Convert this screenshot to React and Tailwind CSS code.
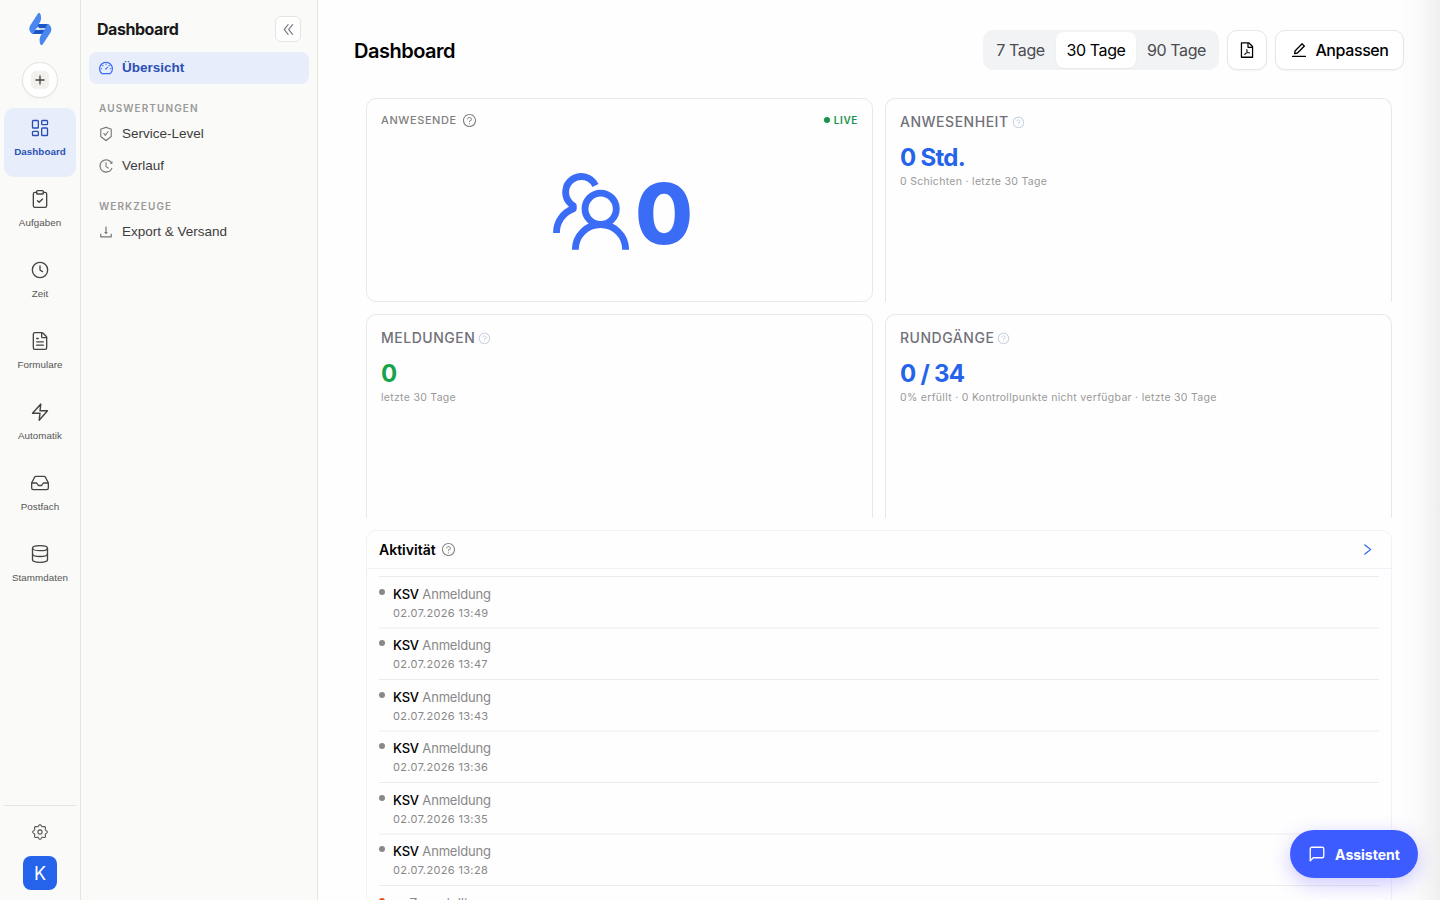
import React from "react";
import { LayoutDashboard, ClipboardCheck, FileText, Inbox, Database, Plus } from "lucide-react";
import {
  AiOutlineDashboard, AiOutlineSafetyCertificate, AiOutlineHistory, AiOutlineDownload,
  AiOutlineQuestionCircle, AiOutlineDoubleLeft, AiOutlineRight, AiOutlineFilePdf, AiOutlineEdit,
} from "react-icons/ai";

const RAIL = [
  { label: "Dashboard", icon: LayoutDashboard, active: true },
  { label: "Aufgaben", icon: ClipboardCheck },
  { label: "Zeit", icon: ClockIcon },
  { label: "Formulare", icon: FileText },
  { label: "Automatik", icon: BoltIcon },
  { label: "Postfach", icon: Inbox },
  { label: "Stammdaten", icon: Database },
];

const ACTIVITY = ["13:49", "13:47", "13:43", "13:36", "13:35", "13:28"];

function ClockIcon({ className }) {
  return (
    <svg className={className} width="20" height="20" viewBox="0 0 24 24" fill="none" stroke="currentColor" strokeWidth="1.6" strokeLinecap="round" strokeLinejoin="round">
      <circle cx="12" cy="12" r="9.2" />
      <path d="M12 7v5l3 2" />
    </svg>
  );
}

function BoltIcon({ className }) {
  return (
    <svg className={className} width="20" height="20" viewBox="0 0 24 24" fill="none" stroke="currentColor" strokeWidth="1.7" strokeLinecap="round" strokeLinejoin="round">
      <path d="M13 2.500L3 13.500h9l-1 8.500L21 10.500h-9z" />
    </svg>
  );
}

// eight soft teeth around a small hub
const GEAR = Array.from({ length: 96 }, (_, i) => {
  const a = (i / 96) * Math.PI * 2;
  const r = 6.5 + 0.8 * Math.cos(8 * a);
  return `${(8 + r * Math.cos(a)).toFixed(2)},${(8 + r * Math.sin(a)).toFixed(2)}`;
}).join(" ");

function GearIcon() {
  return (
    <svg className="mt-[18px] text-[#555]" width="16" height="16" viewBox="0 0 16 16" fill="none" stroke="currentColor" strokeWidth="1.1">
      <polygon points={GEAR} />
      <circle cx="8" cy="8" r="2.1" />
    </svg>
  );
}

function Logo() {
  const lobe = "M117 38q6 4 5 20-1 8-8 16l-17 29q-11-7-10-19 1-6 5-11l20-31q3-4 5-4z";
  return (
    <svg width="23" height="34" viewBox="86 36 69 102">
      <path d="M106 72h37l-7 13H99z" fill="#1b56c9" />
      <path d="M134 102H97l7-13h37z" fill="#1b56c9" />
      <path d={lobe} fill="#4a86f0" />
      <path d={lobe} fill="#4a86f0" transform="rotate(180 120 87)" />
      <path d="M107 89l6-10 6 10z" fill="#f4f7fd" />
    </svg>
  );
}

function PeopleIcon() {
  return (
    <svg width="76.3" height="76.7" viewBox="68 69 229 230" fill="none" stroke="#3b6cf6" strokeWidth="20.5" strokeLinejoin="round">
      <circle cx="211" cy="176.5" r="47" />
      <path d="M135 299a75.5 75.5 0 0 1 151 0" />
      <path d="M195.500 106.500A47 47 0 1 0 120 160q4 5 9 7v9A76 76 0 0 0 78.500 249" />
    </svg>
  );
}

function Rail() {
  return (
    <aside className="flex w-[81px] shrink-0 flex-col items-center border-r border-[#e6e6df] bg-[#fafaf8] font-['Liberation_Sans',sans-serif]">
      <div className="mt-3 h-[34px]"><Logo /></div>
      <button className="mt-4 flex h-9 w-9 items-center justify-center rounded-full border border-[#e3e3dc] bg-white shadow-xs">
        <span className="flex h-[18px] w-[18px] items-center justify-center rounded-[5px] bg-[#f2f1ec] text-[#444]">
          <Plus size={14} strokeWidth={2.2} />
        </span>
      </button>
      <nav className="mt-[10px] flex flex-col gap-[2px]">
        {RAIL.map(({ label, icon: Icon, active }) => (
          <a
            key={label}
            className={`flex h-[69px] w-[72px] flex-col items-center rounded-[10px] pt-[10px] text-[9.8px] leading-[14px] tracking-[0.06px] ${active ? "bg-[#e7edfb] font-bold text-[#2b50b5]" : "text-[#555]"}`}
          >
            <Icon size={20} strokeWidth={1.6} className={active ? "text-[#2b50b5]" : "text-[#444]"} />
            <span className="mt-[7px]">{label}</span>
          </a>
        ))}
      </nav>
      <div className="mt-auto flex w-[72px] flex-col items-center border-t border-[#e6e6df] pb-[10px]">
        <GearIcon />
        <div className="mt-4 flex h-[34px] w-[34px] items-center justify-center rounded-lg bg-[#2563eb] font-[Inter,sans-serif] text-[18px] text-white">K</div>
      </div>
    </aside>
  );
}

function SideLink({ icon: Icon, children, active }) {
  return (
    <a className={`flex h-8 items-center gap-2 rounded-lg px-[9px] font-['Liberation_Sans',sans-serif] text-[13.5px] ${active ? "bg-[#e7edfb] font-bold text-[#2b50b5]" : "text-[#3d3d3d]"}`}>
      <Icon size={16} className={active ? "text-[#3b6cf6]" : "text-[#777]"} />
      {children}
    </a>
  );
}

function SideHeading({ children }) {
  return <div className="pl-[10px] text-[10px] leading-[14px] font-semibold tracking-[1.1px] text-[#999]">{children}</div>;
}

function SidePanel() {
  return (
    <aside className="w-[237px] shrink-0 border-r border-[#e6e6df] bg-[#fafaf8] px-2 pt-4">
      <div className="flex h-[26px] items-center justify-between pr-2 pl-2">
        <span className="text-[16px] font-bold tracking-[-0.45px] text-[#1a1a1a]">Dashboard</span>
        <button className="flex h-[26px] w-[26px] items-center justify-center rounded-[6px] border border-[#e6e6df] bg-white text-[#777]">
          <AiOutlineDoubleLeft size={15} />
        </button>
      </div>
      <div className="mt-[10px]"><SideLink icon={AiOutlineDashboard} active>Übersicht</SideLink></div>
      <div className="mt-[17px] mb-[3px]"><SideHeading>AUSWERTUNGEN</SideHeading></div>
      <SideLink icon={AiOutlineSafetyCertificate}>Service-Level</SideLink>
      <SideLink icon={AiOutlineHistory}>Verlauf</SideLink>
      <div className="mt-[17px] mb-[3px]"><SideHeading>WERKZEUGE</SideHeading></div>
      <SideLink icon={AiOutlineDownload}>Export &amp; Versand</SideLink>
    </aside>
  );
}

function Toolbar() {
  return (
    <header className="flex h-10 items-center justify-between text-[16px] tracking-[-0.4px]">
      <h1 className="pt-[2px] text-[20px] font-semibold tracking-[-0.5px] text-black">Dashboard</h1>
      <div className="flex gap-2">
        <div className="flex h-10 w-[236px] items-center rounded-[10px] bg-[#f2f3f5] p-[2px] text-[#4b4b50]">
          <span className="w-[71px] text-center">7 Tage</span>
          <span className="flex h-9 w-20 items-center justify-center rounded-lg bg-white text-black shadow-xs">30 Tage</span>
          <span className="w-[81px] text-center">90 Tage</span>
        </div>
        <button className="flex h-10 w-10 items-center justify-center rounded-[10px] border border-[#e6e7ea] bg-white shadow-xs">
          <AiOutlineFilePdf size={18} />
        </button>
        <button className="flex h-10 w-[129px] items-center justify-center gap-[7px] rounded-[10px] border border-[#e6e7ea] bg-white font-medium text-black shadow-xs">
          <AiOutlineEdit size={18} />
          Anpassen
        </button>
      </div>
    </header>
  );
}

function StatCard({ title, value, note, color }) {
  return (
    <section className="h-[204px] rounded-t-[10px] border border-b-0 border-[#e9e9e4] px-[14px] pt-3">
      <div className="flex h-5 items-center gap-[3px] text-[14px] font-medium tracking-[0.52px] text-[#71717a]">
        {title}
        <AiOutlineQuestionCircle size={13} className="mt-[2px] text-[#c5cfdf]" />
      </div>
      <div className={`mt-[11px] mb-px text-[24px] leading-[31px] font-bold tracking-[-0.7px] ${color}`}>{value}</div>
      <div className="text-[10.5px] leading-4 tracking-[0.3px] text-[#999]">{note}</div>
    </section>
  );
}

function Activity() {
  return (
    <section className="mt-3 h-[420px] rounded-t-[10px] border border-[#f0f2f7]">
      <div className="flex h-[38px] items-center justify-between border-b border-[#f0f2f7] pr-4 pl-3">
        <div className="flex items-center gap-[5px] text-[14px] font-semibold text-black">
          Aktivität
          <AiOutlineQuestionCircle size={15} className="text-[#888]" />
        </div>
        <AiOutlineRight size={15} className="text-[#2563eb]" />
      </div>
      <ul className="mx-3 mt-[7px]">
        {ACTIVITY.map((time, i) => (
          <li
            key={time}
            className={`flex gap-2 ${i % 2 ? "h-[52px] border-t-2 border-[#f6f6f6] pt-[7px]" : "h-[51px] border-t border-[#ececec] pt-2"}`}
          >
            <span className="mt-1 h-[6px] w-[6px] rounded-full bg-[#888]" />
            <div>
              <div className="text-[13px] leading-[19px] tracking-[-0.18px] text-[#888]"><span className="font-medium text-black">KSV</span> Anmeldung</div>
              <div className="text-[11px] leading-[18px] tracking-[0.35px] text-[#888]">02.07.2026 {time}</div>
            </div>
          </li>
        ))}
        <li className="flex gap-2 border-t border-[#ececec] pt-2">
          <span className="mt-1 h-[6px] w-[6px] rounded-full bg-[#ea4c0b]" />
          <div className="text-[13px] leading-[19px] tracking-[-0.2px] text-[#888]">— Zugestellt</div>
        </li>
      </ul>
    </section>
  );
}

export default function App() {
  return (
    <div className="relative flex h-[900px] w-[1440px] overflow-hidden bg-[#fefefe] font-[Inter,sans-serif]">
      <Rail />
      <SidePanel />
      <main className="min-w-0 flex-1 overflow-hidden pt-[30px] pr-9 pl-9">
        <Toolbar />
        <div className="mx-3 mt-7">
          <div className="grid grid-cols-2 gap-3">
            <section className="h-[204px] rounded-[10px] border border-[#e9e9e4] px-[14px] pt-[12px]">
              <div className="flex h-[18px] items-center justify-between">
                <div className="flex items-center gap-[5px] text-[11px] font-medium tracking-[0.6px] text-[#808080]">
                  ANWESENDE
                  <AiOutlineQuestionCircle size={15} />
                </div>
                <div className="flex items-center gap-1 text-[10px] font-semibold tracking-[0.6px] text-[#15934a]">
                  <span className="h-[6px] w-[6px] rounded-full bg-[#15934a]" />
                  LIVE
                </div>
              </div>
              <div className="mt-8 flex h-[101px] items-center justify-center gap-[6px] pl-[7px]">
                <PeopleIcon />
                <span className="pt-1 text-[84px] leading-none font-extrabold text-[#3b6cf6]">0</span>
              </div>
            </section>
            <StatCard title="ANWESENHEIT" value="0 Std." note="0 Schichten · letzte 30 Tage" color="text-[#2563eb]" />
            <StatCard title="MELDUNGEN" value="0" note="letzte 30 Tage" color="text-[#16a34a]" />
            <StatCard title="RUNDGÄNGE" value="0 / 34" note="0% erfüllt · 0 Kontrollpunkte nicht verfügbar · letzte 30 Tage" color="text-[#2563eb]" />
          </div>
          <Activity />
        </div>
      </main>
      <div className="pointer-events-none absolute inset-y-0 right-0 w-11 bg-linear-to-r from-transparent via-black/[0.015] to-black/[0.06]" />
      <button className="absolute right-[22px] bottom-[22px] flex h-12 w-32 items-center justify-center gap-[9px] rounded-full bg-[#3d5cff] text-[14px] font-bold text-white shadow-[0_6px_20px_rgba(80,60,255,0.28)]">
        <svg width="18" height="18" viewBox="0 0 24 24" fill="none" stroke="currentColor" strokeWidth="1.8" strokeLinejoin="round">
          <path d="M21 15a2 2 0 0 1-2 2H7l-4 4V5a2 2 0 0 1 2-2h14a2 2 0 0 1 2 2z" />
        </svg>
        Assistent
      </button>
    </div>
  );
}
